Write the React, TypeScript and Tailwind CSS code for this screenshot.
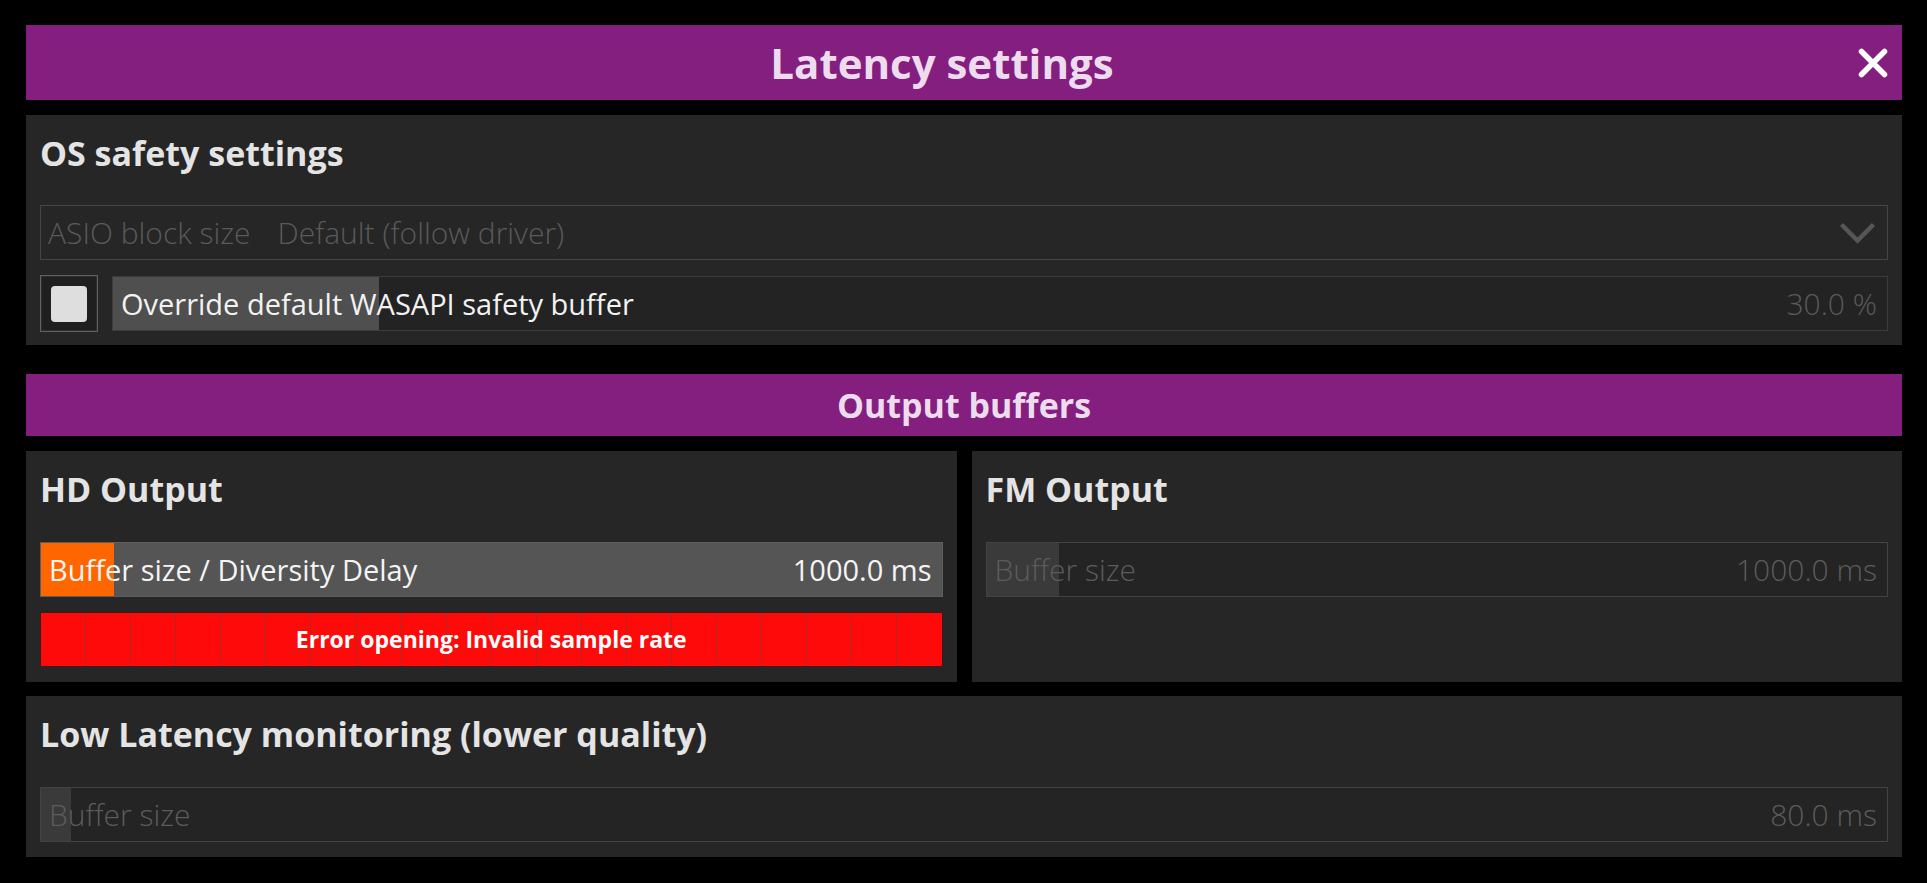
import React from 'react';

type Variant = 'active' | 'idle' | 'disabled';

const sliderStyles: Record<Variant, { box: string; fill: string; label: string; value: string }> = {
  active: {
    box: 'bg-[#555555] border-[#5e5e5e]',
    fill: 'bg-[#ff6600]',
    label: 'text-[#f4f4f4] font-normal text-[29px]',
    value: 'text-[#f4f4f4] font-normal text-[29px]',
  },
  idle: {
    box: 'bg-[#232323] border-[#3c3c3c]',
    fill: 'bg-[#4f4f4f]',
    label: 'text-[#f2f2f2] font-normal text-[29px]',
    value: 'text-[#5a5a5a] font-light text-[30px]',
  },
  disabled: {
    box: 'bg-[#242424] border-[#434343]',
    fill: 'bg-[#3a3a3a]',
    label: 'text-[#5c5c5c] font-light text-[30px]',
    value: 'text-[#5c5c5c] font-light text-[30px]',
  },
};

function Slider({ label, value, fill, variant }: { label: string; value: string; fill: number; variant: Variant }) {
  const s = sliderStyles[variant];
  return (
    <div className={`relative h-[55px] flex-1 border ${s.box}`}>
      <div className={`absolute left-0 top-0 bottom-0 ${s.fill}`} style={{ width: fill }} />
      <div className="relative flex h-full items-center justify-between pl-[8px] pr-[10px] leading-none">
        <span className={s.label}>{label}</span>
        <span className={s.value}>{value}</span>
      </div>
    </div>
  );
}

function Panel({ title, children, className = '' }: { title: string; children: React.ReactNode; className?: string }) {
  return (
    <section className={`bg-[#262626] px-[14px] ${className}`}>
      <h2 className="flex h-[76px] items-center text-[34px] font-bold leading-none text-[#e4e4e4]">{title}</h2>
      {children}
    </section>
  );
}

function PurpleBar({ children, className = '' }: { children: React.ReactNode; className?: string }) {
  return <div className={`flex items-center bg-[#841f80] ${className}`}>{children}</div>;
}

export default function App() {
  const segments = Array.from({ length: 20 }, (_, i) => i);

  return (
    <div className="min-h-screen bg-black pl-[26px] pr-[25px] pt-[25px] pb-[26px] font-['Open_Sans','Liberation_Sans',sans-serif]">
      <PurpleBar className="h-[75px]">
        <h1 className="flex-1 text-center text-[42px] font-bold leading-none text-[#ecdcee]">Latency settings</h1>
        <button className="mr-[14px] h-[30px] w-[30px]">
          <svg width="30" height="30" viewBox="0 0 30 30">
            <path d="M3.5 3.5 L26.5 26.5 M26.5 3.5 L3.5 26.5" stroke="#ffffff" strokeWidth="5.5" strokeLinecap="round" />
          </svg>
        </button>
      </PurpleBar>

      <Panel title="OS safety settings" className="mt-[15px] pb-[13px]">
        <div className="mt-[14px] flex h-[55px] items-center border border-[#454545] pl-[7px] pr-[11px] text-[30px] font-light leading-none text-[#5a5a5a]">
          <span>ASIO block size</span>
          <span className="ml-[27px]">Default (follow driver)</span>
          <svg className="ml-auto" width="37" height="22" viewBox="0 0 37 22">
            <path d="M2.5 2.5 L18.5 18.5 L34.5 2.5" fill="none" stroke="#565656" strokeWidth="4.5" />
          </svg>
        </div>
        <div className="mt-[15px] flex h-[57px] items-center gap-[14px]">
          <div className="flex h-[57px] w-[58px] items-center justify-center border border-[#606060] bg-[#1f1f1f] shadow-[inset_0_0_0_1px_#2e2e2e]">
            <div className="h-[36px] w-[36px] rounded-[4px] bg-[#dedede]" />
          </div>
          <Slider label="Override default WASAPI safety buffer" value="30.0 %" fill={266} variant="idle" />
        </div>
      </Panel>

      <PurpleBar className="mt-[29px] h-[62px] justify-center">
        <h2 className="text-[34px] font-bold leading-none text-[#ecdcee]">Output buffers</h2>
      </PurpleBar>

      <div className="mt-[15px] grid grid-cols-2 gap-[15px]">
        <Panel title="HD Output" className="pb-[15px]">
          <div className="mt-[15px] flex">
            <Slider label="Buffer size / Diversity Delay" value="1000.0 ms" fill={73} variant="active" />
          </div>
          <div className="relative mt-[15px] h-[55px] border border-[#3a1a1a] bg-[#ff0a0a]">
            <div className="flex h-full">
              {segments.map((i) => (
                <div key={i} className={i === 0 ? 'flex-1' : 'flex-1 border-l border-[#b82424]'} />
              ))}
            </div>
            <div className="absolute inset-0 flex items-center justify-center text-[23px] font-bold leading-none text-white">
              Error opening: Invalid sample rate
            </div>
          </div>
        </Panel>
        <Panel title="FM Output" className="pb-[15px]">
          <div className="mt-[15px] flex">
            <Slider label="Buffer size" value="1000.0 ms" fill={72} variant="disabled" />
          </div>
        </Panel>
      </div>

      <Panel title="Low Latency monitoring (lower quality)" className="mt-[14px] pb-[15px]">
        <div className="mt-[15px] flex">
          <Slider label="Buffer size" value="80.0 ms" fill={30} variant="disabled" />
        </div>
      </Panel>
    </div>
  );
}
